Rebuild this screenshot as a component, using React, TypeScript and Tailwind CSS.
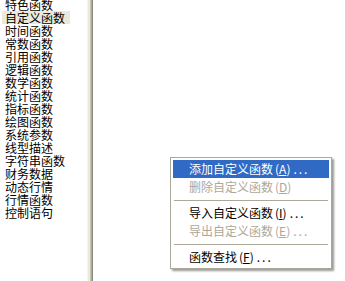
const items = [
  "特色函数",
  "自定义函数",
  "时间函数",
  "常数函数",
  "引用函数",
  "逻辑函数",
  "数学函数",
  "统计函数",
  "指标函数",
  "绘图函数",
  "系统参数",
  "线型描述",
  "字符串函数",
  "财务数据",
  "动态行情",
  "行情函数",
  "控制语句",
];

type MenuEntry =
  | { sep: true }
  | { sep?: false; label: string; key: string; dots?: boolean; disabled?: boolean; active?: boolean };

const menu: MenuEntry[] = [
  { label: "添加自定义函数", key: "A", dots: true, active: true },
  { label: "删除自定义函数", key: "D", disabled: true },
  { sep: true },
  { label: "导入自定义函数", key: "I", dots: true },
  { label: "导出自定义函数", key: "E", dots: true, disabled: true },
  { sep: true },
  { label: "函数查找", key: "F", dots: true },
];

function ContextMenu() {
  return (
    <div className="absolute left-[170px] top-[157px] w-[162px] border border-[#aca899] bg-white p-[2px] shadow-[2px_2px_2px_rgba(0,0,0,0.4)]">
      {menu.map((m, i) =>
        m.sep ? (
          <div key={i} className="h-[8px] flex items-center px-[1px]">
            <div className="h-px w-full bg-[#aca899]" />
          </div>
        ) : (
          <div
            key={i}
            className={`h-[18px] pl-[16px] flex items-center whitespace-nowrap text-[12px] leading-[18px] ${
              m.active ? "bg-[#316ac5] text-white" : m.disabled ? "text-[#aca899]" : "text-black"
            }`}
          >
            <span>{m.label}</span>
            <span className="ml-[2px]">
              (<u>{m.key}</u>)
            </span>
            {m.dots && <span className="ml-[3px] tracking-[2px]">...</span>}
          </div>
        )
      )}
    </div>
  );
}

export default function App() {
  return (
    <div
      className="relative w-[345px] h-[281px] overflow-hidden bg-white flex"
      style={{ fontFamily: '"Noto Sans CJK SC", "Liberation Sans", sans-serif' }}
    >
      <div className="w-[87px] pl-[2px] pt-0">
        <div className="-mt-[2px]">
          {items.map((t, i) => (
            <div key={t} className="h-[13px] text-[12px] leading-[13px] text-black whitespace-nowrap">
              <span className={`inline-block h-[13px] pl-[3px] pr-[5px] ${i === 1 ? "bg-[#ece9d8]" : ""}`}>
                {t}
              </span>
            </div>
          ))}
        </div>
      </div>
      <div className="w-px bg-[#f6f4ec]" />
      <div className="w-[2px] bg-[#ece9d8]" />
      <div className="w-px bg-[#c9c6b8]" />
      <div className="w-px bg-[#aca899]" />
      <div className="w-px bg-[#8c8a7e]" />
      <div className="flex-1 bg-white" />
      <ContextMenu />
    </div>
  );
}
